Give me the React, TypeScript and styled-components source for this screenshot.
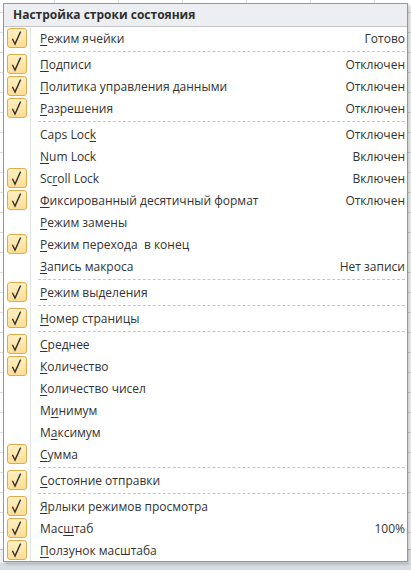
import styled, { createGlobalStyle } from "styled-components";

const GlobalStyle = createGlobalStyle`
  html, body {
    margin: 0;
    padding: 0;
  }
  body {
    font-family: "Open Sans", "Noto Sans", "DejaVu Sans", sans-serif;
    font-size: 12px;
    color: #333;
  }
`;

const Window = styled.div`
  position: relative;
  width: 411px;
  height: 570px;
  overflow: hidden;
  display: flex;
  flex-direction: column;
  background: #fff;
`;

const Sheet = styled.div`
  flex: 1;
  background-color: #fff;
  background-image: linear-gradient(#dadcdd 1px, transparent 1px),
    linear-gradient(90deg, #dadcdd 1px, transparent 1px);
  background-size: 100% 20px, 64px 100%;
  background-position: 0 12px, 54px 0;
`;

const Tabs = styled.div`
  height: 13px;
  border-top: 1px solid #b9bfc8;
  background: #eef0f3;
`;

const StatusBar = styled.div`
  height: 7px;
  background: #d8dce3;
`;

const Menu = styled.div`
  position: absolute;
  top: 3px;
  left: 3px;
  width: 405px;
  box-sizing: border-box;
  border: 1px solid #979797;
  background: #fff;
  box-shadow: 2px 2px 3px rgba(0, 0, 0, 0.22);
`;

const Header = styled.div`
  height: 22px;
  line-height: 22px;
  padding-left: 9px;
  border-bottom: 1px solid #c5c5c5;
  background: #eceef1;
  font-weight: 700;
  color: #2f2f2f;
`;

const List = styled.div`
  display: flex;
  flex-direction: column;
  background: linear-gradient(
    90deg,
    transparent 26px,
    #e2e3e3 26px,
    #e2e3e3 27px,
    #fff 27px,
    #fff 28px,
    transparent 28px
  );
`;

const Row = styled.div`
  height: 22px;
  display: flex;
  align-items: center;
`;

const Gutter = styled.div`
  width: 27px;
  height: 22px;
  display: flex;
  align-items: center;
  padding-left: 3px;
  box-sizing: border-box;
  flex-shrink: 0;
`;

const CheckBox = styled.div`
  width: 20px;
  height: 20px;
  box-sizing: border-box;
  border: 1px solid #e2ac4c;
  border-radius: 3px;
  background: linear-gradient(#fdf0c4, #fcdd94);
  display: flex;
  align-items: center;
  justify-content: center;
`;

const Label = styled.span`
  flex: 1;
  padding-left: 9px;
  white-space: pre;
  color: #333;
`;

const Key = styled.span`
  text-decoration: underline;
  text-underline-offset: 2px;
`;

const Value = styled.span`
  padding-right: 2px;
  white-space: nowrap;
  color: #333;
`;

const Separator = styled.div`
  height: 4px;
  display: flex;
  align-items: center;
  padding-left: 34px;
  padding-right: 2px;

  &::after {
    content: "";
    flex: 1;
    border-top: 1px dashed #c6c6c6;
  }
`;

type Entry = { label: string; value?: string; checked?: boolean } | "sep";

const entries: Entry[] = [
  { label: "&Режим ячейки", value: "Готово", checked: true },
  "sep",
  { label: "&Подписи", value: "Отключен", checked: true },
  { label: "&Политика управления данными", value: "Отключен", checked: true },
  { label: "&Разрешения", value: "Отключен", checked: true },
  "sep",
  { label: "Caps Loc&k", value: "Отключен" },
  { label: "&Num Lock", value: "Включен" },
  { label: "Sc&roll Lock", value: "Включен", checked: true },
  { label: "&Фиксированный десятичный формат", value: "Отключен", checked: true },
  { label: "&Режим замены" },
  { label: "&Режим перехода  в конец", checked: true },
  { label: "&Запись макроса", value: "Нет записи" },
  "sep",
  { label: "&Режим выделения", checked: true },
  "sep",
  { label: "&Номер страницы", checked: true },
  "sep",
  { label: "&Среднее", checked: true },
  { label: "&Количество", checked: true },
  { label: "&Количество чисел" },
  { label: "М&инимум" },
  { label: "М&аксимум" },
  { label: "&Сумма", checked: true },
  "sep",
  { label: "&Состояние отправки", checked: true },
  "sep",
  { label: "&Ярлыки режимов просмотра", checked: true },
  { label: "Мас&штаб", value: "100%", checked: true },
  { label: "&Ползунок масштаба", checked: true },
];

const Check = () => (
  <svg width="14" height="16" viewBox="0 0 14 16">
    <path
      d="M2.4 8.8 L5 14 L10.6 1.6"
      fill="none"
      stroke="#333"
      strokeWidth="1.4"
      strokeLinejoin="miter"
    />
  </svg>
);

// "&" marks the access key letter
const renderLabel = (text: string) => {
  const i = text.indexOf("&");
  if (i < 0) return text;
  return (
    <>
      {text.slice(0, i)}
      <Key>{text[i + 1]}</Key>
      {text.slice(i + 2)}
    </>
  );
};

export default function App() {
  return (
    <>
      <GlobalStyle />
      <Window>
        <Sheet />
        <Tabs />
        <StatusBar />
        <Menu>
          <Header>Настройка строки состояния</Header>
          <List>
            {entries.map((e, idx) =>
              e === "sep" ? (
                <Separator key={idx} />
              ) : (
                <Row key={idx}>
                  <Gutter>
                    {e.checked && (
                      <CheckBox>
                        <Check />
                      </CheckBox>
                    )}
                  </Gutter>
                  <Label>{renderLabel(e.label)}</Label>
                  {e.value && <Value>{e.value}</Value>}
                </Row>
              )
            )}
          </List>
        </Menu>
      </Window>
    </>
  );
}
